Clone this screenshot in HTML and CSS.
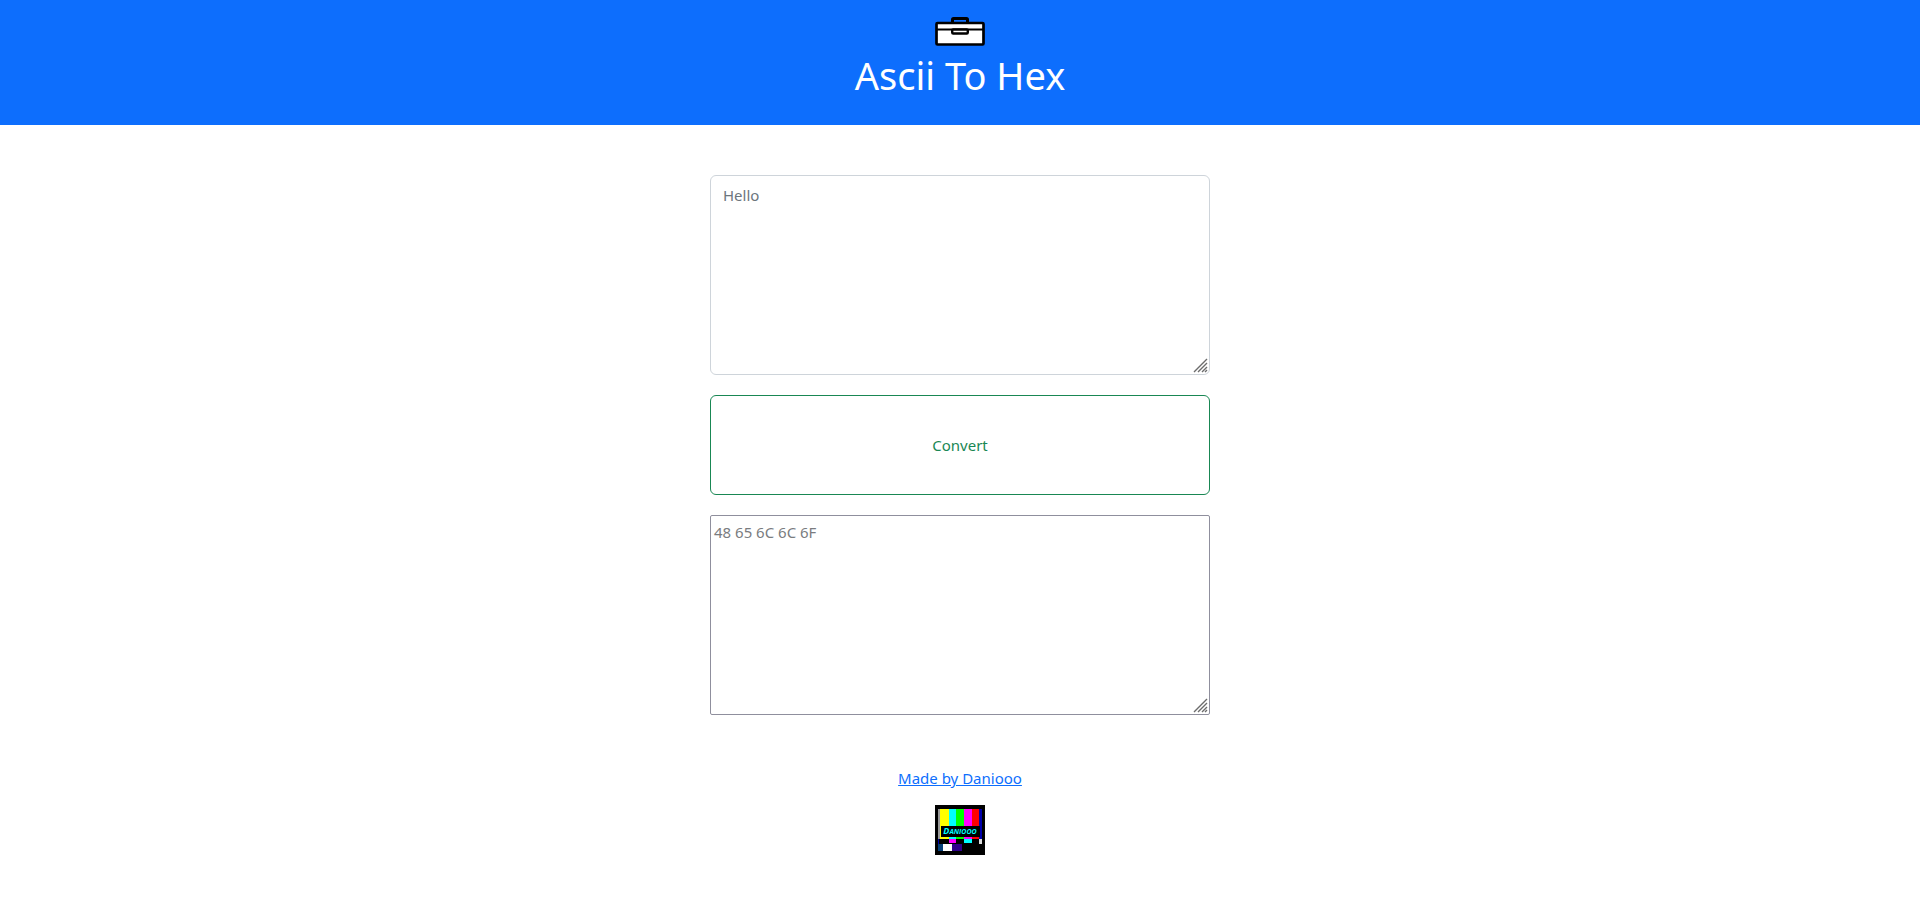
FILE: index.html
```html
<!DOCTYPE html>
<html lang="en">
<head>
<meta charset="utf-8">
<meta name="viewport" content="width=device-width, initial-scale=1">
<title>Ascii To Hex</title>
<link rel="stylesheet" href="styles.css">
</head>
<body>
<header class="header">
  <a class="home" href="#" aria-label="Tools">
    <svg class="toolbox" viewBox="0 0 50 30" aria-hidden="true">
      <rect x="17.500" y="1.500" width="15" height="6" rx="1" fill="#0d6efd" stroke="#000" stroke-width="3"/>
      <rect x="1.500" y="6" width="47" height="21.500" rx="1" fill="#fff" stroke="#000" stroke-width="2.700"/>
      <path d="M2 12.500H48" stroke="#000" stroke-width="2"/>
      <rect x="17.200" y="12.500" width="15.600" height="4" rx="1" fill="#fff" stroke="#000" stroke-width="2.400"/>
    </svg>
  </a>
  <h1 class="title">Ascii To Hex</h1>
</header>
<main class="converter">
  <div class="field">
    <textarea class="area area-input" aria-label="Ascii text" placeholder="Hello"></textarea>
    <svg class="grip" viewBox="0 0 15 15" aria-hidden="true"><path d="M1 14L14 1M5 14L14 5M9 14L14 9M12 14L14 12"/></svg>
  </div>
  <button class="convert" type="button">Convert</button>
  <div class="field">
    <textarea class="area area-output" aria-label="Hex output" placeholder="48 65 6C 6C 6F"></textarea>
    <svg class="grip" viewBox="0 0 15 15" aria-hidden="true"><path d="M1 14L14 1M5 14L14 5M9 14L14 9M12 14L14 12"/></svg>
  </div>
</main>
<footer class="footer">
  <a class="credit" href="#">Made by Daniooo</a>
  <svg class="logo" viewBox="0 0 50 50" role="img" aria-label="Daniooo">
    <rect width="50" height="50" fill="#000"/>
    <rect x="3" y="4" width="2" height="30" fill="#999"/>
    <rect x="5" y="4" width="9" height="30" fill="#ff0"/>
    <rect x="14" y="4" width="7" height="30" fill="#0ff"/>
    <rect x="21" y="4" width="8" height="30" fill="#0f0"/>
    <rect x="29" y="4" width="8" height="30" fill="#f0f"/>
    <rect x="37" y="4" width="7" height="30" fill="#f00"/>
    <rect x="44" y="4" width="3" height="30" fill="#00a"/>
    <rect x="3" y="34" width="1" height="5" fill="#00a"/>
    <rect x="14" y="34" width="7" height="4" fill="#f0f"/>
    <rect x="29" y="34" width="8" height="4" fill="#0ff"/>
    <rect x="44" y="34" width="3" height="5" fill="#ddd"/>
    <rect x="3" y="39" width="5" height="7" fill="#07407a"/>
    <rect x="8" y="39" width="9" height="7" fill="#fff"/>
    <rect x="17" y="39" width="10" height="7" fill="#30008a"/>
    <rect x="6" y="21" width="39" height="11" fill="#000"/>
    <text class="logo-text" x="25" y="29" text-anchor="middle">D<tspan class="logo-small">ANIOOO</tspan></text>
  </svg>
</footer>
</body>
</html>
```
FILE: styles.css
```css
* { box-sizing: border-box; }
body {
  margin: 0;
  background: #fff;
  color: #212529;
  font: 16px/24px "Noto Sans", "Open Sans", sans-serif;
}
.header {
  display: flex;
  flex-direction: column;
  align-items: center;
  padding: 17px 16px 26px;
  background: #0d6efd;
  color: #fff;
}
.home { display: block; }
.toolbox { display: block; width: 50px; height: 30px; }
.title {
  margin: 4px 0 0;
  font-size: 38px;
  font-weight: 400;
  line-height: 48px;
}
.converter {
  display: flex;
  flex-direction: column;
  gap: 20px;
  width: 100%;
  max-width: 500px;
  margin: 50px auto 0;
}
.field { position: relative; display: flex; }
.area {
  width: 100%;
  height: 200px;
  background: #fff;
  color: #212529;
  font: inherit;
  font-size: 15px;
  resize: none;
}
.area-input {
  padding: 7px 12px;
  border: 1px solid #ced4da;
  border-radius: 6px;
}
.area-input::placeholder { color: #6c757d; }
.area-output {
  padding: 4px 3px;
  border: 1px solid #8f8f9d;
  border-radius: 2px;
}
.area-output::placeholder { color: #7a7c7f; }
.grip {
  position: absolute;
  right: 2px;
  bottom: 2px;
  width: 15px;
  height: 15px;
  fill: none;
  stroke: #6c6c6c;
  stroke-width: 1.4;
  pointer-events: none;
}
.convert {
  height: 100px;
  border: 1px solid #198754;
  border-radius: 6px;
  background: #fff;
  color: #198754;
  font: inherit;
  font-size: 15px;
}
.footer {
  display: flex;
  flex-direction: column;
  align-items: center;
  gap: 15px;
  padding: 51px 0 24px;
}
.credit { color: #0d6efd; font-size: 15px; }
.logo { display: block; width: 50px; height: 50px; }
.logo-text {
  fill: #0ff;
  font: italic bold 9px "Open Sans", sans-serif;
}
.logo-small { font-size: 7px; }
```
